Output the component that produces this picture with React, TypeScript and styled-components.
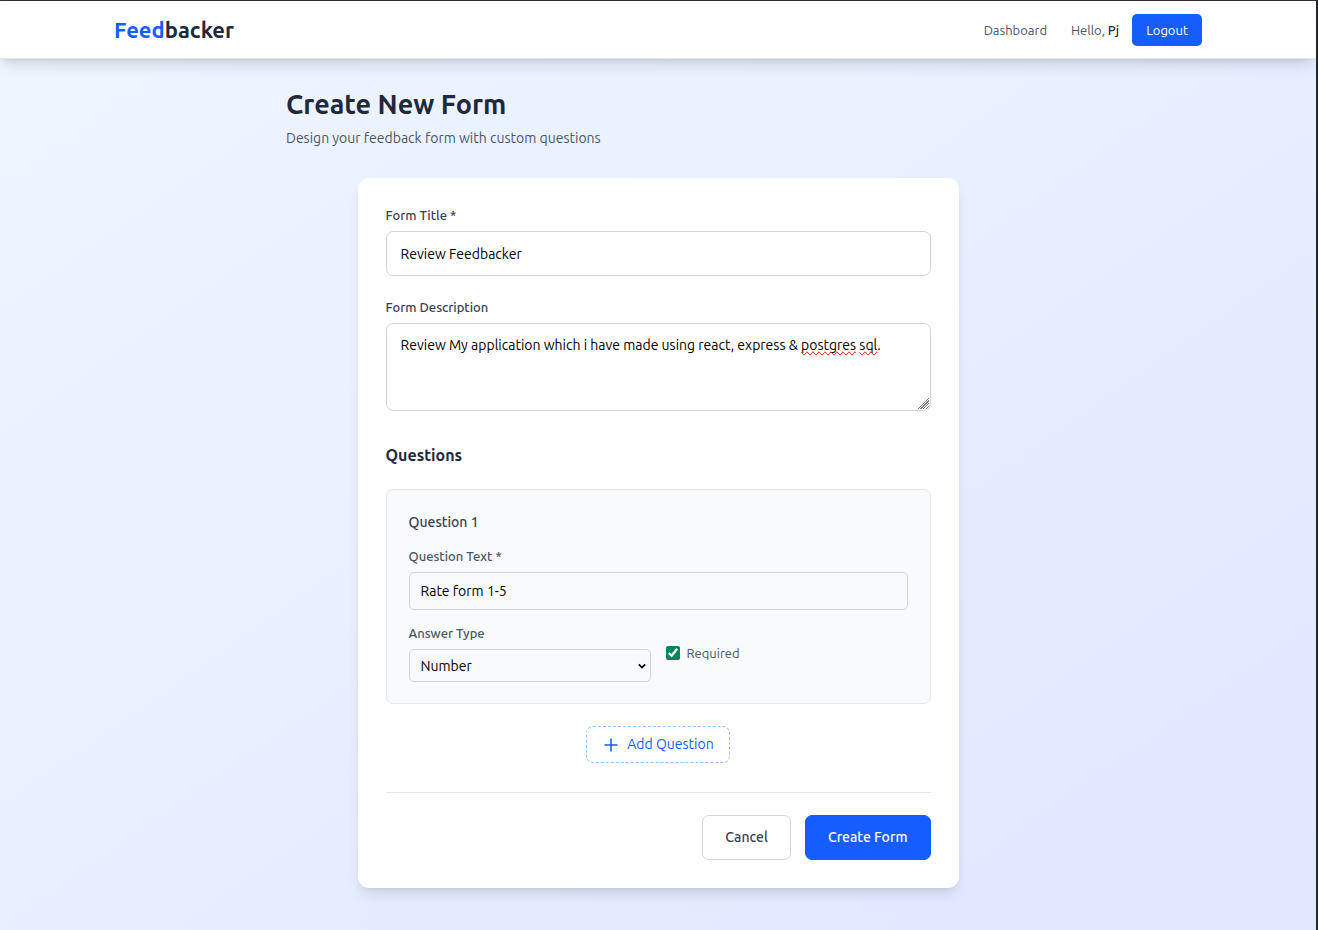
import React, { useState } from "react";
import styled, { createGlobalStyle, css } from "styled-components";

const GlobalStyle = createGlobalStyle`
  *, *::before, *::after { box-sizing: border-box; }
  body {
    margin: 0;
    font-family: Ubuntu, "Noto Sans", sans-serif;
    font-size: 14px;
    line-height: 22px;
    color: #1e2939;
  }
  h1, h2, h3, p { margin: 0; }
  button, input, select, textarea { font: inherit; color: inherit; margin: 0; }
  button { cursor: pointer; }
  a { text-decoration: none; }
`;

const Page = styled.div`
  min-height: 100vh;
  border-top: 1px solid #303036;
  border-right: 2px solid #26262b;
  background: linear-gradient(to bottom right, #eff6ff, #e0e7ff);
`;

const Header = styled.header`
  padding: 13px 28px 12px;
  background: #fff;
  border-bottom: 1px solid #e5e7eb;
  box-shadow: 0 9px 14px -3px rgba(0, 0, 0, 0.12), 0 4px 6px -4px rgba(0, 0, 0, 0.12);
`;

const HeaderInner = styled.div`
  display: flex;
  align-items: center;
  justify-content: space-between;
  max-width: 1088px;
  margin: 0 auto;
`;

const Brand = styled.a`
  font-size: 22px;
  line-height: 28px;
  font-weight: 600;
  color: #1e2939;
`;

const BrandAccent = styled.span`
  color: #155dfc;
`;

const Nav = styled.nav`
  display: flex;
  align-items: center;
  font-size: 13px;
  line-height: 18px;
  color: #4a5565;
`;

const NavLink = styled.a`
  margin-right: 24px;
  color: #4a5565;
`;

const Greeting = styled.span`
  margin-right: 13px;
`;

const UserName = styled.span`
  font-weight: 500;
  color: #1e2939;
`;

const Button = styled.button<{ $variant: "primary" | "outline"; $small?: boolean }>`
  border-radius: 7px;
  font-weight: 500;
  ${({ $small }) =>
    $small
      ? css`padding: 7px 14px; font-size: 13px; line-height: 18px; font-weight: 400; border-radius: 5px;`
      : css`padding: 11px 22px; font-size: 14px; line-height: 21px;`}
  ${({ $variant, $small }) =>
    $variant === "primary"
      ? css`background: #155dfc; color: #fff; border: ${$small ? "0" : "1px solid #155dfc"};`
      : css`background: #fff; color: #364153; border: 1px solid #d1d5dc;`}
`;

const Main = styled.main`
  max-width: 744px;
  margin: 0 auto;
  padding: 29px 0 28px;
`;

const Title = styled.h1`
  font-size: 27px;
  line-height: 32px;
  font-weight: 600;
`;

const Subtitle = styled.p`
  margin-top: 7px;
  color: #4a5565;
`;

const Card = styled.form`
  max-width: 601px;
  margin: 29px auto 0;
  padding: 28px;
  background: #fff;
  border-radius: 11px;
  box-shadow: 0 9px 14px -3px rgba(0, 0, 0, 0.1), 0 4px 6px -4px rgba(0, 0, 0, 0.1);
`;

const Field = styled.div<{ $gap?: number }>`
  display: flex;
  flex-direction: column;
  gap: 7px;
  margin-bottom: ${({ $gap = 0 }) => $gap}px;
`;

const Label = styled.label<{ $muted?: boolean }>`
  font-size: 13px;
  line-height: 18px;
  font-weight: 500;
  color: ${({ $muted }) => ($muted ? "#4a5565" : "#364153")};
`;

const control = css`
  display: block;
  width: 100%;
  border: 1px solid #d1d5dc;
  background: transparent;
  color: #000;
  outline: none;
`;

const TextInput = styled.input<{ $compact?: boolean }>`
  ${control}
  height: ${({ $compact }) => ($compact ? 38 : 45)}px;
  padding: 0 ${({ $compact }) => ($compact ? 11 : 14)}px;
  border-radius: ${({ $compact }) => ($compact ? 5 : 7)}px;
`;

const AreaWrap = styled.div`
  position: relative;
`;

const TextArea = styled.textarea`
  ${control}
  height: 88px;
  padding: 10px 14px;
  border-radius: 7px;
  resize: vertical;

  &::-webkit-resizer {
    background:
      linear-gradient(135deg, #fff 50%, transparent 50%) right 1px bottom 1px / 11px 11px no-repeat,
      repeating-linear-gradient(135deg, transparent 0 1px, #777 1px 2px) right 1px bottom 1px / 11px 11px no-repeat;
  }
`;

const SpellLayer = styled.div`
  position: absolute;
  inset: 0;
  padding: 11px 15px;
  color: transparent;
  pointer-events: none;
`;

const Misspelt = styled.span`
  text-decoration-line: spelling-error;
`;

const SectionTitle = styled.h2`
  margin: 32px 0 21px;
  font-size: 16px;
  line-height: 25px;
  font-weight: 600;
`;

const QuestionCard = styled.section`
  padding: 21px 22px;
  border: 1px solid #e5e7eb;
  border-radius: 7px;
  background: #f9fafb;
`;

const QuestionTitle = styled.h3`
  margin-bottom: 14px;
  font-size: 14px;
  line-height: 22px;
  font-weight: 500;
  color: #364153;
`;

const Columns = styled.div`
  display: grid;
  grid-template-columns: 1fr 1fr;
  align-items: center;
  gap: 15px;
`;

const SelectWrap = styled.div`
  position: relative;

  svg {
    position: absolute;
    right: 5px;
    top: 13px;
    pointer-events: none;
  }
`;

const Select = styled.select`
  ${control}
  appearance: none;
  height: 33px;
  padding: 0 11px;
  border-radius: 5px;
`;

const CheckLabel = styled.label`
  display: flex;
  align-items: center;
  gap: 7px;
  font-size: 13px;
  line-height: 18px;
  color: #4a5565;
`;

const Checkbox = styled.input`
  width: 14px;
  height: 14px;
  accent-color: #04855a;
`;

const AddButton = styled.button`
  display: flex;
  align-items: center;
  gap: 7px;
  margin: 22px auto 29px;
  padding: 7px 15px;
  line-height: 21px;
  color: #155dfc;
  background: transparent;
  border: 1px dashed #8ec5ff;
  border-radius: 7px;
`;

const Actions = styled.div`
  display: flex;
  justify-content: flex-end;
  gap: 14px;
  padding-top: 22px;
  border-top: 1px solid #e5e7eb;
`;

export default function App() {
  const [title, setTitle] = useState("Review Feedbacker");
  const [description, setDescription] = useState(
    "Review My application which i have made using react, express & postgres sql."
  );
  const [question, setQuestion] = useState("Rate form 1-5");
  const [required, setRequired] = useState(true);

  return (
    <>
      <GlobalStyle />
      <Page>
        <Header>
          <HeaderInner>
            <Brand href="#">
              <BrandAccent>Feed</BrandAccent>backer
            </Brand>
            <Nav>
              <NavLink href="#dashboard">Dashboard</NavLink>
              <Greeting>
                Hello, <UserName>Pj</UserName>
              </Greeting>
              <Button type="button" $variant="primary" $small>
                Logout
              </Button>
            </Nav>
          </HeaderInner>
        </Header>
        <Main>
          <Title>Create New Form</Title>
          <Subtitle>Design your feedback form with custom questions</Subtitle>
          <Card onSubmit={(e: React.FormEvent) => e.preventDefault()}>
            <Field $gap={22}>
              <Label htmlFor="title">Form Title *</Label>
              <TextInput id="title" value={title} onChange={(e) => setTitle(e.target.value)} />
            </Field>
            <Field>
              <Label htmlFor="description">Form Description</Label>
              <AreaWrap>
                <TextArea
                  id="description"
                  spellCheck={false}
                  value={description}
                  onChange={(e) => setDescription(e.target.value)}
                />
                <SpellLayer aria-hidden="true">
                  {description.split(/(postgres|sql)/).map((part, i) =>
                    i % 2 ? <Misspelt key={i}>{part}</Misspelt> : part
                  )}
                </SpellLayer>
              </AreaWrap>
            </Field>
            <SectionTitle>Questions</SectionTitle>
            <QuestionCard>
              <QuestionTitle>Question 1</QuestionTitle>
              <Field $gap={14}>
                <Label htmlFor="question" $muted>
                  Question Text *
                </Label>
                <TextInput
                  id="question"
                  $compact
                  value={question}
                  onChange={(e) => setQuestion(e.target.value)}
                />
              </Field>
              <Columns>
                <Field>
                  <Label htmlFor="type" $muted>
                    Answer Type
                  </Label>
                  <SelectWrap>
                    <Select id="type" defaultValue="Number">
                      <option>Number</option>
                    </Select>
                    <svg width="8" height="8" viewBox="0 0 8 8" fill="none" stroke="#000" strokeWidth="1.6" aria-hidden="true">
                      <path d="M0.8 2.4 4 5.6 7.2 2.4" />
                    </svg>
                  </SelectWrap>
                </Field>
                <CheckLabel>
                  <Checkbox
                    type="checkbox"
                    checked={required}
                    onChange={(e) => setRequired(e.target.checked)}
                  />
                  Required
                </CheckLabel>
              </Columns>
            </QuestionCard>
            <AddButton type="button">
              <svg width="18" height="18" viewBox="0 0 24 24" fill="none" stroke="currentColor" strokeWidth="2" strokeLinecap="round" aria-hidden="true">
                <path d="M12 4v16m8-8H4" />
              </svg>
              Add Question
            </AddButton>
            <Actions>
              <Button type="button" $variant="outline">
                Cancel
              </Button>
              <Button type="submit" $variant="primary">
                Create Form
              </Button>
            </Actions>
          </Card>
        </Main>
      </Page>
    </>
  );
}
